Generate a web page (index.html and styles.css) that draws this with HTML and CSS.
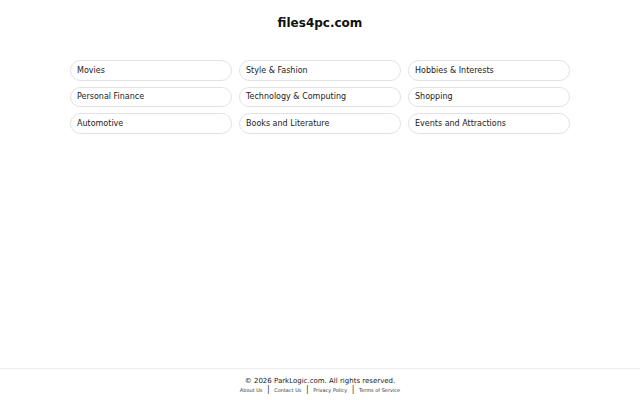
FILE: index.html
```html
<!DOCTYPE html>
<html>
<head>
<meta charset="utf-8">
<link rel="stylesheet" href="styles.css">
</head>
<body>
<div class="page">
  <header class="header"><h1 class="title">files4pc.com</h1></header>
  <main class="main">
    <div class="grid">
      <a class="pill" href="#">Movies</a>
      <a class="pill" href="#">Style &amp; Fashion</a>
      <a class="pill" href="#">Hobbies &amp; Interests</a>
      <a class="pill" href="#">Personal Finance</a>
      <a class="pill" href="#">Technology &amp; Computing</a>
      <a class="pill" href="#">Shopping</a>
      <a class="pill" href="#">Automotive</a>
      <a class="pill" href="#">Books and Literature</a>
      <a class="pill" href="#">Events and Attractions</a>
    </div>
  </main>
  <footer class="footer">
    <div class="copy">© 2026 ParkLogic.com. All rights reserved.</div>
    <div class="links">
      <a href="#">About Us</a><span class="sep">|</span><a href="#">Contact Us</a><span class="sep">|</span><a href="#">Privacy Policy</a><span class="sep">|</span><a href="#">Terms of Service</a>
    </div>
  </footer>
</div>
</body>
</html>
```
FILE: styles.css
```css
html, body { margin: 0; padding: 0; }
body {
  font-family: "DejaVu Sans", sans-serif;
  color: #111;
  background: #fff;
}
.page {
  display: flex;
  flex-direction: column;
  min-height: 400px;
}
.header {
  display: flex;
  justify-content: center;
  padding-top: 15px;
}
.title {
  margin: 0;
  font-size: 12px;
  font-weight: bold;
  line-height: 16px;
  color: #111;
}
.main {
  flex: 1;
  display: flex;
  justify-content: center;
  padding-top: 29px;
}
.grid {
  width: 500px;
  display: grid;
  grid-template-columns: repeat(3, 1fr);
  column-gap: 7px;
  row-gap: 6px;
  align-content: start;
}
.pill {
  display: flex;
  align-items: center;
  height: 20.5px;
  box-sizing: border-box;
  padding: 0 6px;
  border: 1px solid #e2e2e2;
  border-radius: 10.5px;
  font-size: 8px;
  color: #222;
  text-decoration: none;
}
.footer {
  border-top: 1px solid #ececec;
  padding: 7px 0 6px;
  text-align: center;
}
.copy {
  font-size: 7px;
  line-height: 10px;
  color: #222;
}
.links {
  font-size: 5px;
  line-height: 8px;
  color: #333;
}
.links a { color: #333; text-decoration: none; }
.sep { margin: 0 4.5px; font-size: 8px; }
```
